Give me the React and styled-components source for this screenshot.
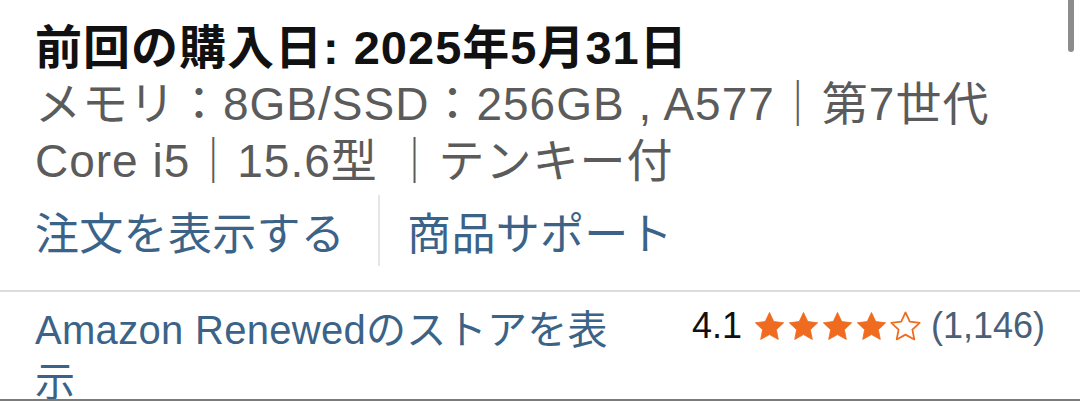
import React from "react";
import styled, { createGlobalStyle } from "styled-components";

const Global = createGlobalStyle`
  html, body { margin: 0; padding: 0; background: #fff; }
  body { font-family: "Liberation Sans", "Noto Sans CJK JP", sans-serif; }
`;

const Screen = styled.div`
  position: relative;
  width: 1080px;
  height: 401px;
  box-sizing: border-box;
  border-bottom: 2px solid #7b7b7b;
  overflow: hidden;
  background: #fff;
`;

const Scrollbar = styled.div`
  position: absolute;
  top: -4px;
  right: 6px;
  width: 6px;
  height: 56px;
  border-radius: 3px;
  background: #8c8c8c;
`;

const Details = styled.section`
  padding: 20px 35px 0;
`;

const Title = styled.h2`
  margin: 0;
  font-size: 47px;
  line-height: 56px;
  font-weight: 700;
  letter-spacing: 1px;
  color: #111;
`;

const Spec = styled.p`
  margin: 0;
  font-size: 46px;
  line-height: 57px;
  letter-spacing: 1px;
  color: #5b5b5b;
`;

const Actions = styled.div`
  display: flex;
  align-items: center;
  height: 71px;
  margin-top: 5px;
`;

const ActionLink = styled.a`
  font-size: 44px;
  letter-spacing: 0.3px;
  color: #3b6388;
  text-decoration: none;
`;

const VDivider = styled.span`
  width: 2px;
  align-self: stretch;
  background: #e6e6e6;
  margin: 0 27px 0 33px;
`;

const HDivider = styled.hr`
  margin: 24px 0 0;
  border: 0;
  height: 2px;
  background: #dcdcdc;
`;

const StoreRow = styled.div`
  display: flex;
  align-items: flex-start;
  gap: 50px;
  padding: 12px 35px 0;
`;

const StoreLink = styled.a`
  flex: 1;
  font-size: 40px;
  line-height: 52px;
  letter-spacing: 0.3px;
  color: #3b6388;
  text-decoration: none;
`;

const Rating = styled.div`
  display: flex;
  align-items: center;
  flex-shrink: 0;
  height: 44px;
  font-size: 36px;
  color: #111;
`;

const Stars = styled.span`
  display: inline-flex;
  gap: 1px;
  margin: 0 9px 0 11px;
`;

const Count = styled.span`
  color: #4a6076;
`;

const STAR = "M12 1.8l3.1 6.6 7.2.9-5.3 5 1.4 7.1L12 17.9l-6.4 3.5 1.4-7.1-5.3-5 7.2-.9z";

function Star({ filled }) {
  return (
    <svg width="33" height="33" viewBox="0 0 24 24">
      <path
        d={STAR}
        fill={filled ? "#ef6b1f" : "none"}
        stroke="#ef6b1f"
        strokeWidth={filled ? 0.6 : 1.3}
        strokeLinejoin="round"
      />
    </svg>
  );
}

export default function App() {
  return (
    <>
      <Global />
      <Screen>
        <Scrollbar />
        <Details>
          <Title>前回の購入日: 2025年5月31日</Title>
          <Spec>メモリ：8GB/SSD：256GB , A577｜第7世代 Core i5｜15.6型 ｜テンキー付</Spec>
          <Actions>
            <ActionLink href="#">注文を表示する</ActionLink>
            <VDivider />
            <ActionLink href="#">商品サポート</ActionLink>
          </Actions>
        </Details>
        <HDivider />
        <StoreRow>
          <StoreLink href="#">Amazon Renewedのストアを表示</StoreLink>
          <Rating>
            4.1
            <Stars>
              {[1, 2, 3, 4, 5].map((i) => (
                <Star key={i} filled={i <= 4} />
              ))}
            </Stars>
            <Count>(1,146)</Count>
          </Rating>
        </StoreRow>
      </Screen>
    </>
  );
}
